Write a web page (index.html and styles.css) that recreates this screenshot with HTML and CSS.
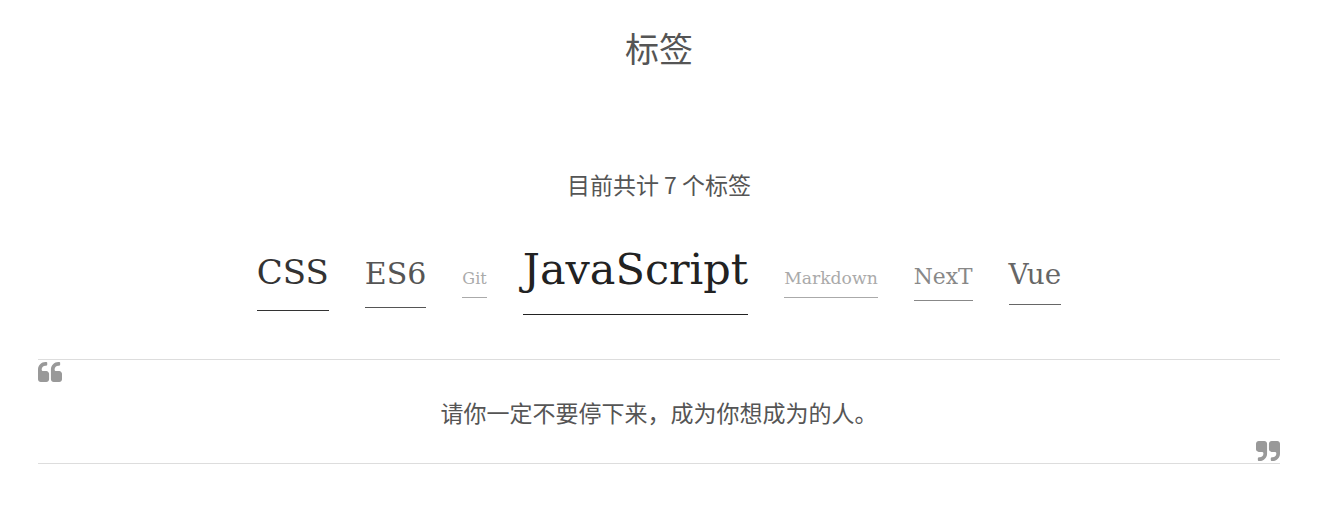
FILE: index.html
```html
<!DOCTYPE html>
<html lang="zh-CN">
<head>
<meta charset="utf-8">
<title>标签</title>
<link rel="stylesheet" href="styles.css">
</head>
<body>
<main class="page">
  <h1 class="title">标签</h1>
  <div class="count">目前共计 7 个标签</div>
  <div class="tags">
    <a class="tag tag-css" href="#">CSS</a>
    <a class="tag tag-es6" href="#">ES6</a>
    <a class="tag tag-git" href="#">Git</a>
    <a class="tag tag-js" href="#">JavaScript</a>
    <a class="tag tag-md" href="#">Markdown</a>
    <a class="tag tag-next" href="#">NexT</a>
    <a class="tag tag-vue" href="#">Vue</a>
  </div>
  <blockquote class="quote">
    <svg class="q-icon" viewBox="0 0 1664 1408" preserveAspectRatio="none"><path d="M768 832v384q0 80-56 136t-136 56h-384q-80 0-136-56t-56-136v-704q0-104 40.5-198.5t109.5-163.5 163.5-109.5 198.5-40.5h64q26 0 45 19t19 45v128q0 26-19 45t-45 19h-64q-106 0-181 75t-75 181v32q0 40 28 68t68 28h224q80 0 136 56t56 136zm896 0v384q0 80-56 136t-136 56h-384q-80 0-136-56t-56-136v-704q0-104 40.5-198.5t109.5-163.5 163.5-109.5 198.5-40.5h64q26 0 45 19t19 45v128q0 26-19 45t-45 19h-64q-106 0-181 75t-75 181v32q0 40 28 68t68 28h224q80 0 136 56t56 136z"/></svg>
    <p class="quote-text">请你一定不要停下来，成为你想成为的人。</p>
    <svg class="q-icon q-right" viewBox="0 0 1664 1408" preserveAspectRatio="none"><path transform="rotate(180 832 704)" d="M768 832v384q0 80-56 136t-136 56h-384q-80 0-136-56t-56-136v-704q0-104 40.5-198.5t109.5-163.5 163.5-109.5 198.5-40.5h64q26 0 45 19t19 45v128q0 26-19 45t-45 19h-64q-106 0-181 75t-75 181v32q0 40 28 68t68 28h224q80 0 136 56t56 136zm896 0v384q0 80-56 136t-136 56h-384q-80 0-136-56t-56-136v-704q0-104 40.5-198.5t109.5-163.5 163.5-109.5 198.5-40.5h64q26 0 45 19t19 45v128q0 26-19 45t-45 19h-64q-106 0-181 75t-75 181v32q0 40 28 68t68 28h224q80 0 136 56t56 136z"/></svg>
  </blockquote>
</main>
</body>
</html>
```
FILE: styles.css
```css
body {
  margin: 0;
  background: #fff;
  color: #555;
  font-family: "Noto Sans CJK SC", "Noto Sans", sans-serif;
}

.page {
  padding: 0 38px;
}

.title {
  margin: 22px 0 0;
  font-size: 34px;
  font-weight: 400;
  line-height: 51px;
  text-align: center;
}

.count {
  margin-top: 95px;
  font-size: 23px;
  line-height: 33px;
  text-align: center;
}

.tags {
  display: flex;
  justify-content: center;
  align-items: baseline;
  gap: 36px;
  margin-top: 47px;
  font-family: "DejaVu Serif", serif;
}

.tag {
  line-height: 1;
  text-decoration: none;
  border-bottom: 1px solid currentColor;
}

.tag-css  { font-size: 34px;   color: #333; padding-bottom: 21px; }
.tag-es6  { font-size: 30px;   color: #555; padding-bottom: 18px; }
.tag-git  { font-size: 16px;   color: #aaa; padding-bottom: 10px; }
.tag-js   { font-size: 43px;   color: #222; padding-bottom: 23px; }
.tag-md   { font-size: 17.2px; color: #aaa; padding-bottom: 10px; }
.tag-next { font-size: 21.8px; color: #888; padding-bottom: 12px; }
.tag-vue  { font-size: 27.8px; color: #666; padding-bottom: 15px; }

.quote {
  margin: 44px 0 0;
  padding: 2px 0 2px;
  border-top: 1px solid #ddd;
  border-bottom: 1px solid #ddd;
}

.q-icon {
  display: block;
  width: 24px;
  height: 20px;
  fill: #999;
}

.q-right {
  margin-left: auto;
}

.quote-text {
  margin: 13px 0 12px;
  font-size: 23px;
  line-height: 34px;
  text-align: center;
}
```
